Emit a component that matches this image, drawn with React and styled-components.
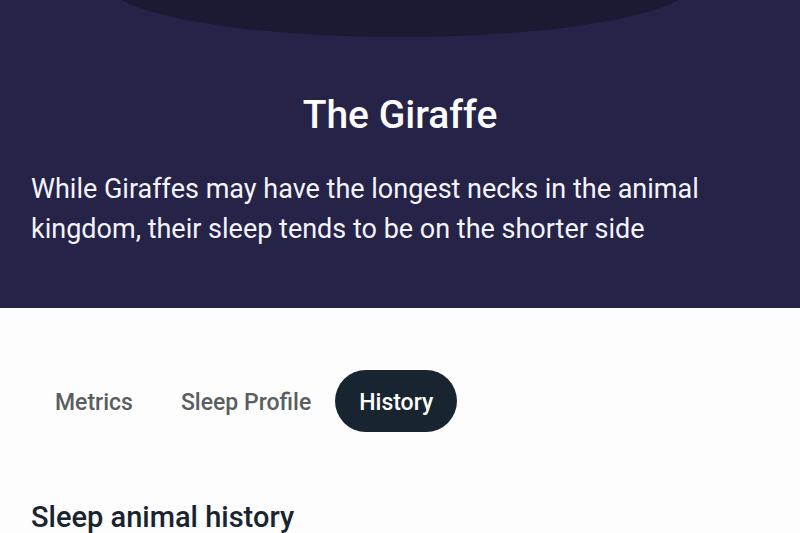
import { useState } from 'react'
import styled, { createGlobalStyle } from 'styled-components'

const tabs = [
  { id: 'metrics', label: 'Metrics' },
  { id: 'profile', label: 'Sleep Profile' },
  { id: 'history', label: 'History' },
]

export default function App() {
  const [active, setActive] = useState('history')

  return (
    <>
      <GlobalStyle />
      <Page>
        <Hero>
          <Ground viewBox="0 0 800 37" preserveAspectRatio="none" aria-hidden="true">
            <ellipse cx="400" cy="-18" rx="295" ry="55" />
          </Ground>
          <Title>The Giraffe</Title>
          <Description>
            While Giraffes may have the longest necks in the animal kingdom, their sleep tends to be
            on the shorter side
          </Description>
        </Hero>
        <Content>
          <TabList role="tablist">
            {tabs.map((tab) => (
              <Tab
                key={tab.id}
                type="button"
                role="tab"
                aria-selected={active === tab.id}
                $active={active === tab.id}
                onClick={() => setActive(tab.id)}
              >
                {tab.label}
              </Tab>
            ))}
          </TabList>
          <SectionTitle>Sleep animal history</SectionTitle>
        </Content>
      </Page>
    </>
  )
}

const GlobalStyle = createGlobalStyle`
  * {
    box-sizing: border-box;
  }

  html {
    scrollbar-width: none;
  }

  body {
    margin: 0;
    background: #fdfdfd;
    font-family: Roboto, 'Liberation Sans', sans-serif;
  }
`

const Page = styled.main`
  display: flex;
  flex-direction: column;
`

const Hero = styled.header`
  display: flex;
  flex-direction: column;
  padding-bottom: 59px;
  background: #252347;
  color: #fcfcff;
`

const Ground = styled.svg`
  display: block;
  width: 100%;
  height: 37px;
  fill: #1a1a33;
`

const Title = styled.h1`
  margin: 54px 31px 30px;
  font-size: 39px;
  font-weight: 500;
  line-height: 48px;
  text-align: center;
`

const Description = styled.p`
  margin: 0 31px;
  color: #f4f4fc;
  font-size: 27px;
  line-height: 40px;
`

const Content = styled.section`
  display: flex;
  flex-direction: column;
  padding: 62px 31px 0;
`

const TabList = styled.div`
  display: flex;
`

const Tab = styled.button`
  height: 62px;
  padding: 2px 24px 0;
  border: 0;
  border-radius: 31px;
  background: ${({ $active }) => ($active ? '#182530' : 'transparent')};
  color: ${({ $active }) => ($active ? '#fff' : '#5a5e60')};
  font-family: inherit;
  font-size: 23px;
  font-weight: 500;
  cursor: pointer;
`

const SectionTitle = styled.h2`
  margin: 67px 0 0;
  color: #182530;
  font-size: 29px;
  font-weight: 500;
  line-height: 36px;
`
